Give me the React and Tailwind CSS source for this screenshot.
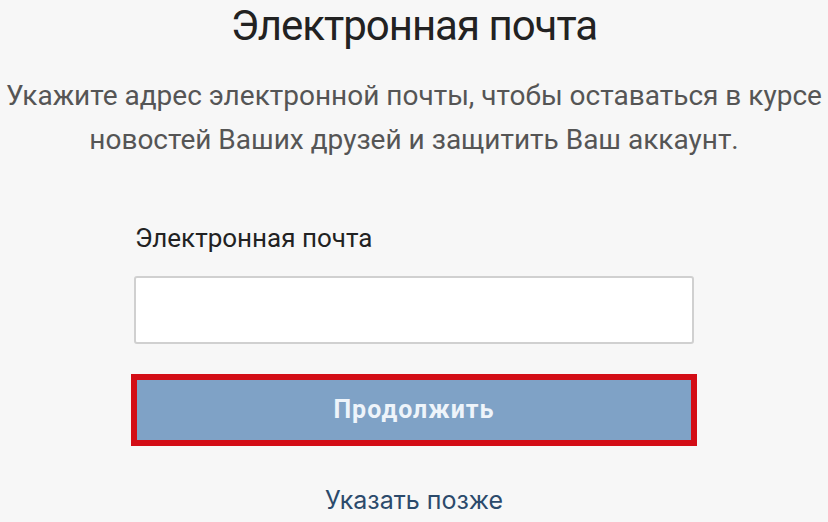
export default function App() {
  return (
    <div className="w-[828px] h-[522px] overflow-hidden bg-[#f7f7f7] font-['Roboto',sans-serif] flex flex-col items-center">
      <h1 className="mt-[4px] text-[42px] leading-[44px] text-[#222] font-normal tracking-[-1px]">
        Электронная почта
      </h1>
      <p className="mt-[26px] w-[900px] text-center text-[28px] leading-[44px] text-[#555]">
        Укажите адрес электронной почты, чтобы оставаться в курсе
        <br />
        новостей Ваших друзей и защитить Ваш аккаунт.
      </p>
      <div className="mt-[60px] w-[560px] flex flex-col">
        <label className="text-[26px] leading-[32px] text-[#222] pl-[1px]">Электронная почта</label>
        <input
          type="text"
          className="mt-[22px] h-[68px] bg-white border-2 border-[#d0d0d0] rounded-[3px] outline-none"
        />
        <div className="mt-[30px] -mx-[3px] border-[6px] border-[#d30d16] bg-[#d30d16]">
          <button className="w-full h-[60px] bg-[#7fa2c6] text-[#eef4fa] text-[25px] font-bold tracking-[1px]">
            Продолжить
          </button>
        </div>
        <a className="mt-[40px] text-center text-[25px] leading-[28px] text-[#2b4a6b] font-['Inter',sans-serif]">
          Указать позже
        </a>
      </div>
    </div>
  )
}
